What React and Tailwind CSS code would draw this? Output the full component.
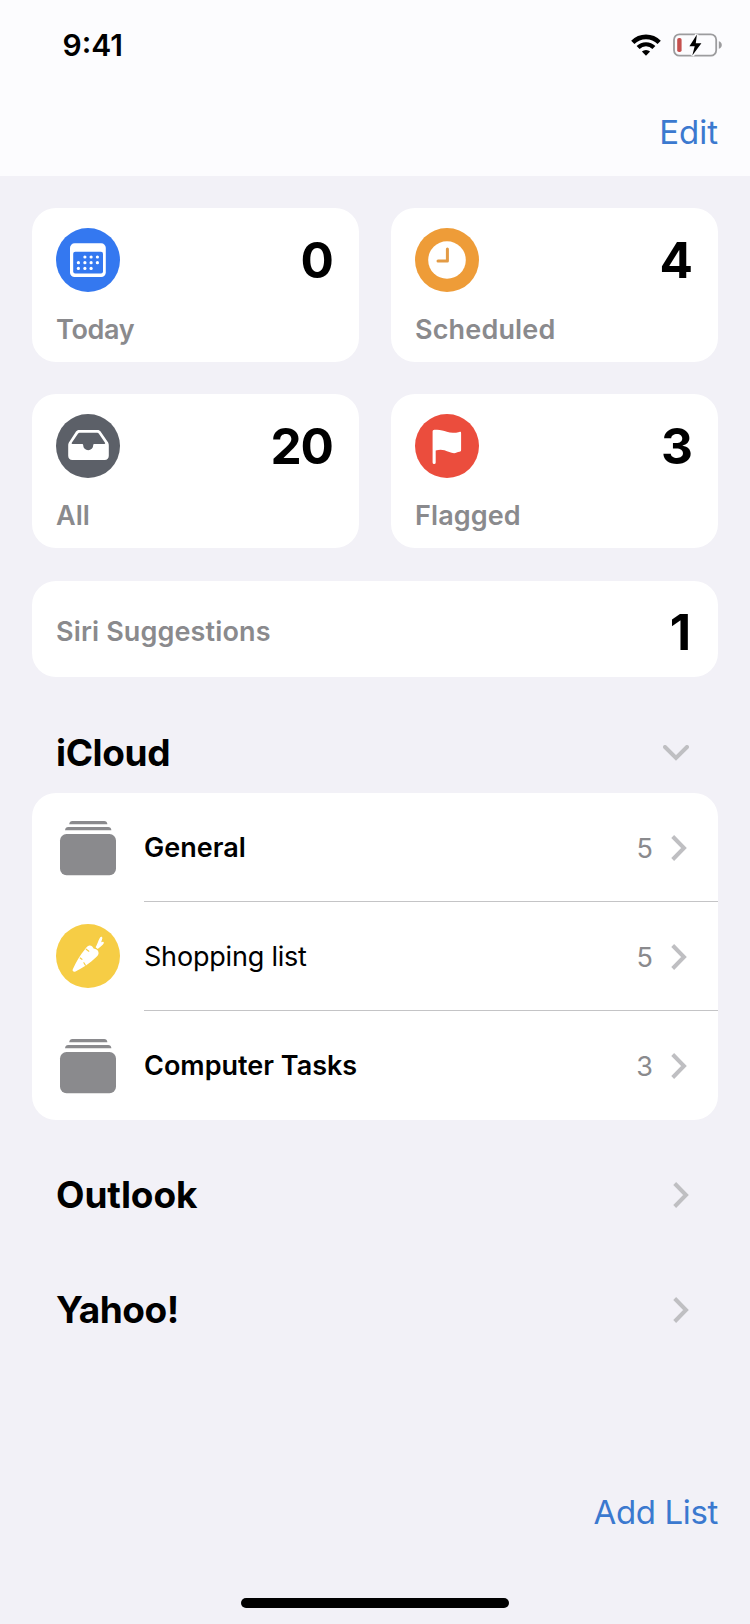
import React from "react";

const CalendarIcon = () => (
  <svg width="64" height="64" viewBox="0 0 64 64">
    <circle cx="32" cy="32" r="32" fill="#3478f0" />
    <rect x="14" y="15.3" width="35.8" height="33.7" rx="4.6" fill="#fff" />
    <rect x="17.2" y="23.8" width="29.8" height="21.6" rx="2" fill="#3478f0" />
    <g fill="#fff">
      {[
        [28.9, 29], [35.1, 29], [41.4, 29],
        [22.4, 34.7], [28.9, 34.7], [35.1, 34.7], [41.4, 34.7],
        [22.4, 40.4], [28.9, 40.4], [35.1, 40.4],
      ].map(([x, y]) => (
        <circle key={`${x}-${y}`} cx={x} cy={y} r="1.6" />
      ))}
    </g>
  </svg>
);

const ClockIcon = () => (
  <svg width="64" height="64" viewBox="0 0 64 64">
    <circle cx="32" cy="32" r="32" fill="#ee9c38" />
    <circle cx="32" cy="32" r="18.8" fill="#fff" />
    <path d="M32.4 21v12H23" fill="none" stroke="#e39b45" strokeWidth="3" strokeLinecap="round" strokeLinejoin="round" />
  </svg>
);

const TrayIcon = () => (
  <svg width="64" height="64" viewBox="0 0 64 64">
    <circle cx="32" cy="32" r="32" fill="#5c6068" />
    <path d="M23 16h18.600c1.300 0 2.300.5 3 1.600l7 10.200c.8 1.200 1.200 2.200 1.200 3.600v10.400c0 2.700-1.500 4.200-4.200 4.200H16.400c-2.700 0-4.200-1.500-4.200-4.200V31.400c0-1.400.4-2.400 1.200-3.600l6.600-10.200c.7-1.100 1.700-1.600 3-1.600z" fill="#fff" />
    <path d="M23.600 18.700h17.600c.6 0 1.100.2 1.500.8l6.300 9.300c.4.700.2 1.200-.6 1.200H38.600c-.9 0-1.400.4-1.400 1.200a5 5 0 0 1-10 0c0-.8-.5-1.200-1.400-1.200h-9.400c-.8 0-1-.5-.6-1.200l6.300-9.300c.4-.6.900-.8 1.500-.8z" fill="#5c6068" />
  </svg>
);

const FlagIcon = () => (
  <svg width="64" height="64" viewBox="0 0 64 64">
    <circle cx="32" cy="32" r="32" fill="#eb4d3d" />
    <path d="M17.600 17.600c0-1.100.7-1.600 1.800-1.800 5.200-.6 8.600.6 12.400 2 4.200 1.400 8.200 1.200 12.600.1 1.100-.3 1.700.1 1.700 1.300v16.800c0 1-.5 1.500-1.600 1.700-2 .3-3.600 1.400-5.400 1.500-3.400 0-6.200-1.800-9.600-2.900-3.200-.9-6-.6-8.800.3v11.900a1.550 1.550 0 0 1-3.100 0z" fill="#fff" />
  </svg>
);

const CarrotIcon = () => (
  <svg width="64" height="64" viewBox="0 0 64 64" className="mb-[2px]">
    <circle cx="32" cy="32" r="32" fill="#f6cd45" />
    <path d="M16.800 45.200C20 38.200 24 31 29.200 25c1.400-1.800 2.200-3.400 4.200-3.600 2.300-.2 3.500 1.400 4.200 3.200 2.400.2 4.900 1.700 5 4.400 0 2-1.300 3.100-2.800 4.600-5.600 5.500-13 10.200-20.300 13.900-1.900.7-3.500-.5-2.700-2.300z" fill="#fff" />
    <path d="M39.600 23.300c1.700-3 2.500-6.300 4.200-9.400.9-1.600 2.900-1.300 2.500.5l-1.100 3.900c.8-.4 1.700-.8 2.300-.4.800.7.100 1.900-.8 2.900-1.600 1.700-3.400 3.100-5 4.200z" fill="#fff" />
    <path d="M30.200 25.200l2.600 2M24.200 34l1.700 1.300M29.400 41.200l-1.500-2.400" stroke="#f6cd45" strokeWidth="1.200" strokeLinecap="round" />
  </svg>
);

const StackIcon = () => (
  <svg width="64" height="64" viewBox="0 0 64 64">
    <g fill="#8a8a8d">
      <path d="M13.200 8.200c.3-2 1.300-3.200 3.200-3.200h31.800c1.900 0 2.900 1.200 3.200 3.200z" />
      <path d="M9 14.300c.3-2 1.300-3.200 3.200-3.200h40c1.900 0 2.900 1.200 3.200 3.200z" />
      <rect x="4" y="18" width="56" height="41.200" rx="6.500" />
    </g>
  </svg>
);

const Chevron = () => (
  <svg width="16" height="26" viewBox="0 0 16 26" fill="none" stroke="#bfbfc2" strokeWidth="4">
    <path d="M1.700 1.500L13 13L1.700 24.500" />
  </svg>
);

const ChevronDown = () => (
  <svg width="26" height="16" viewBox="0 0 26 16" fill="none" stroke="#bfbfc2" strokeWidth="4">
    <path d="M2 2L13 13L24 2" strokeLinecap="round" />
  </svg>
);

const WifiIcon = () => (
  <svg width="30" height="22" viewBox="0 0 30 22">
    <path d="M1.800 8.300a18.700 18.700 0 0 1 26.400 0" fill="none" stroke="#000" strokeWidth="4.600" />
    <path d="M7.100 13.500a11.200 11.200 0 0 1 15.800 0" fill="none" stroke="#000" strokeWidth="4.200" />
    <path d="M15 21.800l-4.100-4.200a5.800 5.800 0 0 1 8.200 0z" />
  </svg>
);

const BatteryIcon = () => (
  <svg width="49" height="24" viewBox="0 0 49 24">
    <rect x="1" y="1.400" width="42.200" height="21.200" rx="5.400" fill="none" stroke="#9c9c9e" strokeWidth="1.800" />
    <path d="M45.800 8.200c2 .6 3 2 3 3.800s-1 3.200-3 3.800z" fill="#9c9c9e" />
    <rect x="4.200" y="5" width="4.400" height="14" rx="1.800" fill="#c5504e" />
    <path d="M23.900 1.600L16.400 13.200h5.300l-2.400 9.200L28.400 10.300h-5.600z" stroke="#fcfcfe" strokeWidth="3.500" fill="#000" style={{ paintOrder: "stroke" }} />
  </svg>
);

const summaries = [
  { label: "Today", count: "0", Icon: CalendarIcon, tracking: "tracking-[-0.3px]" },
  { label: "Scheduled", count: "4", Icon: ClockIcon, tracking: "tracking-[0.15px]" },
  { label: "All", count: "20", Icon: TrayIcon, tracking: "tracking-normal" },
  { label: "Flagged", count: "3", Icon: FlagIcon, tracking: "tracking-[0.1px]" },
];

const lists = [
  { name: "General", count: "5", Icon: StackIcon, style: "font-semibold" },
  { name: "Shopping list", count: "5", Icon: CarrotIcon, style: "font-normal tracking-[-0.2px]" },
  { name: "Computer Tasks", count: "3", Icon: StackIcon, style: "font-semibold" },
];

const accounts = [
  { name: "Outlook", tracking: "tracking-[-0.1px]" },
  { name: "Yahoo!", tracking: "tracking-[-0.5px]" },
];

const Count = ({ children }) => (
  <span className="pt-[2px] text-[49.5px] leading-none font-bold tracking-[-1px]">{children}</span>
);

export default function App() {
  return (
    <div className="flex h-[1624px] w-[750px] flex-col overflow-hidden bg-[#f2f1f7] font-['Inter',sans-serif] text-black">
      <header className="h-[176px] shrink-0 bg-[#fcfcfe]">
        <div className="flex h-[90px] items-center pr-[28px] pl-[62.5px]">
          <span className="text-[30px] leading-none font-semibold">9:41</span>
          <div className="ml-auto flex items-center gap-[12px]">
            <WifiIcon />
            <BatteryIcon />
          </div>
        </div>
        <div className="flex h-[84px] items-center justify-end pr-[32px]">
          <button className="text-[33px] leading-none text-[#3b79cf]">Edit</button>
        </div>
      </header>

      <main className="flex flex-col px-8 pt-8">
        <div className="grid grid-cols-2 gap-x-8 gap-y-[32px]">
          {summaries.map(({ label, count, Icon, tracking }) => (
            <section key={label} className="h-[154px] rounded-[24px] bg-white pt-5 pr-[26px] pl-6">
              <div className="flex h-16 items-center justify-between">
                <Icon />
                <Count>{count}</Count>
              </div>
              <h2 className={`mt-[18px] text-[27px] leading-[40px] font-semibold text-[#8a8a8d] ${tracking}`}>{label}</h2>
            </section>
          ))}
        </div>

        <section className="mt-[33px] flex h-[96px] items-center justify-between rounded-[24px] bg-white pt-[5px] pr-[28px] pl-6">
          <h2 className="text-[27px] leading-[40px] font-semibold tracking-[0.13px] text-[#8a8a8d]">Siri Suggestions</h2>
          <Count>1</Count>
        </section>

        <div className="mt-[35px] flex h-[81px] items-center justify-between pr-[29px] pl-6">
          <h2 className="text-[37px] leading-none font-bold tracking-[-0.4px]">iCloud</h2>
          <ChevronDown />
        </div>

        <ul className="h-[327px] overflow-hidden rounded-[24px] bg-white pl-6">
          {lists.map(({ name, count, Icon, style }, i) => (
            <li key={name} className="flex h-[109px] items-center gap-6">
              <Icon />
              <div className={`flex h-full flex-1 items-center pr-[31px] ${i < 2 ? "border-b border-[#c4c4c6]" : ""}`}>
                <span className={`text-[27px] leading-none ${style}`}>{name}</span>
                <div className="ml-auto flex items-center gap-[18px] pt-px">
                  <span className="pt-px text-[27px] leading-none text-[#8a8a8d]">{count}</span>
                  <Chevron />
                </div>
              </div>
            </li>
          ))}
        </ul>

        <div className="mt-[17px] flex flex-col">
          {accounts.map(({ name, tracking }) => (
            <div key={name} className="flex h-[115px] items-center justify-between pr-[29px] pl-6">
              <h2 className={`text-[37px] leading-none font-bold ${tracking}`}>{name}</h2>
              <Chevron />
            </div>
          ))}
        </div>
      </main>

      <footer className="mt-auto flex flex-col pb-[16px]">
        <button className="mb-[66px] self-end pr-[32px] text-[33px] leading-[40px] tracking-[-0.35px] text-[#3b79cf]">Add List</button>
        <div className="h-[10px] w-[268px] self-center rounded-full bg-black" />
      </footer>
    </div>
  );
}
